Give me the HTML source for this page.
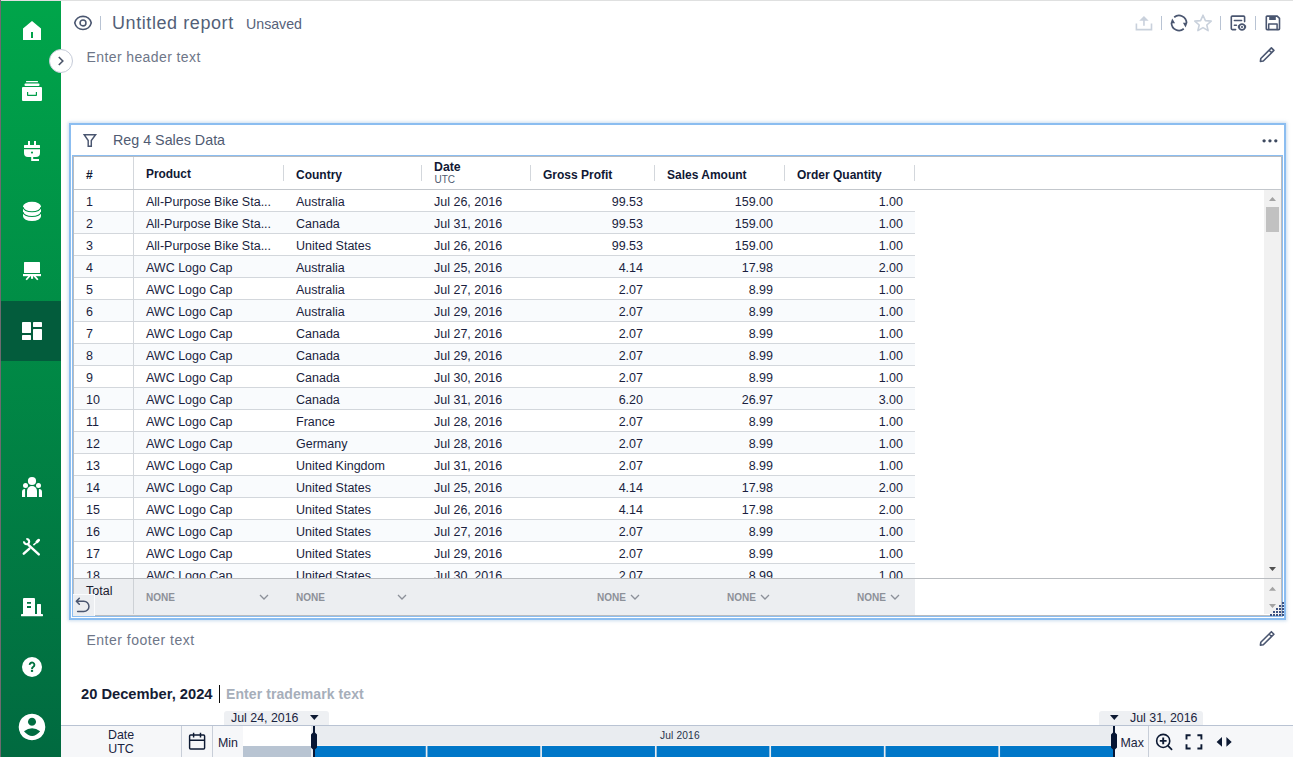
<!DOCTYPE html>
<html><head><meta charset="utf-8">
<style>
*{margin:0;padding:0;box-sizing:border-box}
html,body{width:1293px;height:757px;overflow:hidden;background:#fff;font-family:"Liberation Sans",sans-serif;position:relative}
.a{position:absolute}
.t{position:absolute;white-space:nowrap;line-height:1}
#leftline{left:0;top:0;width:1px;height:757px;background:#6e6a70}
#topline{left:1px;top:0;width:1292px;height:1px;background:#dfe0e0}
#side{left:1px;top:1px;width:60px;height:756px;background:linear-gradient(#00a54a,#016a40)}
.sico{position:absolute;left:1px;width:60px;height:60px}
.sico svg{position:absolute;left:0;top:0}
/* table */
.row{position:absolute;left:74px;width:841px;height:22px;border-bottom:1px solid #d3d7dc}
.row.alt{background:#f9fbfd}
.cell{position:absolute;top:1px;height:21px;font-size:12.5px;color:#1a1e3e;line-height:22px;white-space:nowrap}
.vd{position:absolute;top:0;width:1px;height:21px;background:#d3d7dc;left:59px}
.r{text-align:right}
.hd{position:absolute;font-size:12px;font-weight:bold;color:#101834;white-space:nowrap;line-height:1}
.hdiv{position:absolute;top:165px;width:1px;height:16px;background:#d3d7dc}
.none{position:absolute;top:593px;font-size:10px;font-weight:bold;color:#8c9199;line-height:1}
.chev{position:absolute;top:593.5px}
</style></head><body>
<div class="a" id="leftline"></div>
<div class="a" id="topline"></div>
<div class="a" id="side"></div>
<div class="a" style="left:1px;top:301px;width:60px;height:60px;background:#035c3c"></div>

<!-- sidebar icons -->
<svg class="a" style="left:0;top:0" width="62" height="757" viewBox="0 0 62 757">
 <g fill="#fff">
  <!-- home -->
  <path d="M23 28.5 L32 21 L41 28.5 V40 H23 Z M31 32 V38 H33 V32 Z" fill-rule="evenodd"/>
  <!-- archive -->
  <rect x="26" y="81" width="12" height="1.3" rx=".5"/>
  <rect x="24.5" y="83.5" width="15" height="2.4" rx="1"/>
  <path d="M22 88 a1 1 0 0 1 1 -1 H41 a1 1 0 0 1 1 1 V100 a1 1 0 0 1 -1 1 H23 a1 1 0 0 1 -1 -1 Z M27 92 V95.2 a.8 .8 0 0 0 .8 .8 H36.2 a.8 .8 0 0 0 .8 -.8 V92 H35.8 V94.8 H28.2 V92 Z" fill-rule="evenodd"/>
  <!-- plug -->
  <rect x="28" y="141" width="2" height="4.5"/>
  <rect x="34" y="141" width="2" height="4.5"/>
  <rect x="24" y="145" width="16" height="3" rx=".5"/>
  <path d="M24 149.2 H40 V153 a4 4 0 0 1 -4 4 H28 a4 4 0 0 1 -4 -4 Z M32 151.6 a1 1 0 1 0 .01 0 Z" fill-rule="evenodd"/>
  <path d="M31.2 156.5 H33.2 V159 H39 V161 H31.2 Z"/>
  <!-- database -->
  <path d="M23 206.45 A9 4.65 0 0 1 41 206.45 V216.35 A9 4.65 0 0 1 23 216.35 Z"/>
  <path d="M23 207.1 A9 4.65 0 0 0 41 207.1 M23 211.9 A9 4.65 0 0 0 41 211.9" fill="none" stroke="#009447" stroke-width="1.15"/>
  <!-- presentation -->
  <rect x="24" y="262" width="16" height="11" rx=".5"/>
  <rect x="23" y="274" width="18" height="2.2"/>
  <rect x="31" y="276" width="2.1" height="2.8"/>
  <path d="M29.9 275.6 L26.2 279.8 M34.1 275.6 L37.8 279.8" fill="none" stroke="#fff" stroke-width="1.7"/>
  <!-- dashboard -->
  <rect x="22" y="322" width="9" height="11" rx=".4"/>
  <rect x="22" y="335" width="9" height="5" rx=".4"/>
  <rect x="33" y="322" width="9" height="5" rx=".4"/>
  <rect x="33" y="329" width="9" height="11" rx=".4"/>
  <!-- people -->
  <circle cx="32" cy="481" r="4.1"/>
  <circle cx="25.5" cy="485.5" r="2.5"/>
  <circle cx="38.5" cy="485.5" r="2.5"/>
  <path d="M27 491 a5 5 0 0 1 10 0 V497 H27 Z"/>
  <path d="M22 492 a3 3 0 0 1 3.1 -3 V497 H22 Z"/>
  <path d="M42 492 a3 3 0 0 0 -3.1 -3 V497 H42 Z"/>
  <!-- tools -->
  <g stroke="#fff" fill="none">
   <path d="M28.4 544.8 L38.8 554.4" stroke-width="2.4" stroke-linecap="round"/>
   <path d="M26.37 539.0 A2.6 2.6 0 1 1 24.0 541.37" stroke-width="2.1"/>
   <path d="M23.8 553.6 L29.4 548.6" stroke-width="2.5" stroke-linecap="round"/>
   <path d="M33.4 545.2 L35.8 543" stroke-width="1.6"/>
  </g>
  <ellipse cx="37.7" cy="541.1" rx="2.9" ry="1.5" transform="rotate(-42 37.7 541.1)"/>
  <!-- building -->
  <path d="M23 599 a1 1 0 0 1 1 -1 H34 a1 1 0 0 1 1 1 V614 H23 Z M27 602 V603.8 H31 V602 Z M27 606 V608 H31 V606 Z" fill-rule="evenodd"/>
  <rect x="37" y="604" width="4" height="10.5" rx=".5"/>
  <rect x="21" y="614" width="22" height="2.2" rx=".4"/>
  <!-- help -->
  <circle cx="32" cy="667" r="10"/>
  <path d="M29.7 664.9 A2.35 2.35 0 1 1 33.3 666.8 C32.4 667.4 32 667.9 32 669" fill="none" stroke="#01713f" stroke-width="1.9"/>
  <rect x="30.9" y="669.8" width="2.2" height="2.1" fill="#01713f"/>
  <!-- user -->
  <path d="M32 713.7 a13.3 13.3 0 1 1 -.01 0 Z M32 717.8 a4 4 0 1 0 .01 0 Z M24 731.3 Q32 725.1 40.2 731.3 Q32 740.9 24 731.3 Z" fill-rule="evenodd"/>
 </g>
</svg>

<!-- expand button -->
<div class="a" style="left:49px;top:49px;width:24px;height:24px;border-radius:50%;background:#fff;border:1px solid #c5cbd8"></div>
<svg class="a" style="left:49px;top:49px" width="24" height="24"><path d="M9.8 8 L13.8 12 L9.8 16" fill="none" stroke="#4a5468" stroke-width="1.6"/></svg>

<!-- header -->
<svg class="a" style="left:72px;top:14px" width="22" height="18" viewBox="0 0 22 18">
 <path d="M2.75 8.9 C3.6 5 7 2.3 11 2.3 C15 2.3 18.4 5 19.25 8.9 C18.4 12.8 15 15.5 11 15.5 C7 15.5 3.6 12.8 2.75 8.9 Z" fill="none" stroke="#4a5670" stroke-width="1.65"/>
 <circle cx="11" cy="8.9" r="2.95" fill="none" stroke="#4a5670" stroke-width="1.55"/>
</svg>
<div class="a" style="left:100px;top:16px;width:1px;height:14px;background:#b8c3d3"></div>
<div class="t" style="left:112px;top:14px;font-size:18px;letter-spacing:.58px;color:#535f78">Untitled report</div>
<div class="t" style="left:246px;top:17px;font-size:14.2px;color:#56617a">Unsaved</div>
<div class="t" style="left:86.5px;top:50px;font-size:14px;letter-spacing:.4px;color:#6e7688">Enter header text</div>

<!-- top right icons -->
<svg class="a" style="left:1130px;top:10px" width="160" height="60" viewBox="1130 10 160 60">
 <g fill="none" stroke-linecap="round" stroke-linejoin="round">
  <!-- upload -->
  <g stroke="#c9d1dc" stroke-width="1.7">
   <path d="M1136.4 23.4 V29.6 H1151.5 V23.4" stroke-linecap="butt" stroke-linejoin="miter" stroke-width="1.6"/>
   <path d="M1143.95 20 V25.7" stroke-linecap="butt" stroke-width="1.6"/>
  </g>
  <path d="M1139.2 20.7 L1143.95 15.9 L1148.7 20.7 Z" fill="#c9d1dc"/>
  <!-- refresh -->
  <g stroke="#4a5670" stroke-width="1.7" stroke-linecap="butt">
   <path d="M1174.2 17.25 A7.5 7.5 0 0 1 1186.5 23"/>
   <path d="M1183.8 28.75 A7.5 7.5 0 0 1 1171.5 23"/>
  </g>
  <path d="M1182.9 22.7 L1187.4 22.7 L1185.6 27.6 Z" fill="#4a5670"/>
  <path d="M1170.6 23.3 L1175.1 23.3 L1172.2 18.4 Z" fill="#4a5670"/>
  <!-- star -->
  <path d="M1203 15.2 L1205.4 20.6 L1211.2 21.1 L1206.8 25 L1208.1 30.6 L1203 27.6 L1197.9 30.6 L1199.2 25 L1194.8 21.1 L1200.6 20.6 Z" stroke="#c9d1dc" stroke-width="1.6"/>
  <!-- report view -->
  <g stroke="#4a5670" stroke-width="1.6" stroke-linecap="round">
   <path d="M1235.6 29.6 H1232.3 a1 1 0 0 1 -1 -1 V17.1 a1 1 0 0 1 1 -1 H1243.6 a1 1 0 0 1 1 1 V21.6"/>
   <path d="M1234.4 20.5 H1241.6 M1234.4 25.3 H1236.4"/>
  </g>
  <path d="M1237.7 27 C1238.4 24.6 1240 23.3 1242 23.3 C1244 23.3 1245.6 24.6 1246.3 27 C1245.6 29.4 1244 30.7 1242 30.7 C1240 30.7 1238.4 29.4 1237.7 27 Z" fill="#4a5670"/>
  <circle cx="1242" cy="27" r="2.1" fill="#fff"/>
  <circle cx="1242" cy="27" r="1.05" fill="#4a5670"/>
  <!-- save -->
  <path d="M1266.3 16.9 a.8 .8 0 0 1 .8 -.8 H1277.2 L1279.5 18.4 V28.8 a.8 .8 0 0 1 -.8 .8 H1267.1 a.8 .8 0 0 1 -.8 -.8 Z" stroke="#4a5670" stroke-width="1.6"/>
  <rect x="1269.2" y="16" width="6.6" height="4" fill="#4a5670"/>
  <path d="M1268.7 29.6 V24 H1277.1 V29.6" stroke="#4a5670" stroke-width="1.5"/>
  <!-- pencil header -->
  <path d="M1260.4 61.4 L1260.8 58.5 L1271.4 47.9 L1273.9 50.4 L1263.3 61.0 Z M1269.1 50.2 L1271.6 52.7" stroke="#4a5670" stroke-width="1.6" stroke-linejoin="round"/>
 </g>
 <g fill="#b8c3d3">
  <rect x="1161" y="16" width="1" height="14"/>
  <rect x="1220" y="16" width="1" height="14"/>
  <rect x="1255" y="16" width="1" height="14"/>
 </g>
</svg>

<!-- panel -->
<div class="a" style="left:69px;top:123px;width:1217px;height:497px;border:2px solid #8bbdf0;box-shadow:0 0 3px 1px rgba(120,165,210,.38)"></div>
<svg class="a" style="left:82px;top:132px" width="16" height="17" viewBox="0 0 16 17">
 <path d="M2.2 2.7 H13.6 L9.3 8.5 V14.25 H6.2 V8.5 Z" fill="none" stroke="#4a5670" stroke-width="1.45" stroke-linejoin="miter"/>
</svg>
<div class="t" style="left:113px;top:133px;font-size:14.3px;color:#505b72">Reg 4 Sales Data</div>
<svg class="a" style="left:1260px;top:137px" width="20" height="8"><g fill="#3e4a60"><circle cx="4.1" cy="3.8" r="1.65"/><circle cx="9.95" cy="3.8" r="1.65"/><circle cx="15.8" cy="3.8" r="1.65"/></g></svg>

<!-- table frame -->
<div class="a" style="left:72px;top:155px;width:1211px;height:462px;border:1px solid #8bbdf0"></div>
<div class="a" style="left:73px;top:156px;width:1209px;height:460px;border:1px solid #b9bcc0"></div>
<div class="a" style="left:74px;top:189px;width:1207px;height:1px;background:#c3c7cc"></div>
<div class="a" style="left:133px;top:157px;width:1px;height:32px;background:#d3d7dc"></div>

<!-- header labels -->
<div class="hd" style="left:86px;top:169px">#</div>
<div class="hd" style="left:146px;top:169px;font-size:11.9px">Product</div>
<div class="hdiv" style="left:283px"></div>
<div class="hd" style="left:296px;top:169px">Country</div>
<div class="hdiv" style="left:421px"></div>
<div class="hd" style="left:434px;top:161px;font-size:12.3px">Date</div>
<div class="t" style="left:434.5px;top:175px;font-size:10px;color:#4f5a70">UTC</div>
<div class="hdiv" style="left:530px"></div>
<div class="hd" style="left:543px;top:169px">Gross Profit</div>
<div class="hdiv" style="left:654px"></div>
<div class="hd" style="left:667px;top:169px">Sales Amount</div>
<div class="hdiv" style="left:784px"></div>
<div class="hd" style="left:797px;top:169px">Order Quantity</div>
<div class="hdiv" style="left:914px"></div>

<!--ROWS-->
<div class="row" style="top:190px"><div class="cell" style="left:12px">1</div><div class="vd"></div><div class="cell" style="left:72px">All-Purpose Bike Sta...</div><div class="cell" style="left:222px">Australia</div><div class="cell" style="left:360px">Jul 26, 2016</div><div class="cell r" style="left:457px;width:112px">99.53</div><div class="cell r" style="left:581px;width:118px">159.00</div><div class="cell r" style="left:711px;width:118px">1.00</div></div>
<div class="row alt" style="top:212px"><div class="cell" style="left:12px">2</div><div class="vd"></div><div class="cell" style="left:72px">All-Purpose Bike Sta...</div><div class="cell" style="left:222px">Canada</div><div class="cell" style="left:360px">Jul 31, 2016</div><div class="cell r" style="left:457px;width:112px">99.53</div><div class="cell r" style="left:581px;width:118px">159.00</div><div class="cell r" style="left:711px;width:118px">1.00</div></div>
<div class="row" style="top:234px"><div class="cell" style="left:12px">3</div><div class="vd"></div><div class="cell" style="left:72px">All-Purpose Bike Sta...</div><div class="cell" style="left:222px">United States</div><div class="cell" style="left:360px">Jul 26, 2016</div><div class="cell r" style="left:457px;width:112px">99.53</div><div class="cell r" style="left:581px;width:118px">159.00</div><div class="cell r" style="left:711px;width:118px">1.00</div></div>
<div class="row alt" style="top:256px"><div class="cell" style="left:12px">4</div><div class="vd"></div><div class="cell" style="left:72px">AWC Logo Cap</div><div class="cell" style="left:222px">Australia</div><div class="cell" style="left:360px">Jul 25, 2016</div><div class="cell r" style="left:457px;width:112px">4.14</div><div class="cell r" style="left:581px;width:118px">17.98</div><div class="cell r" style="left:711px;width:118px">2.00</div></div>
<div class="row" style="top:278px"><div class="cell" style="left:12px">5</div><div class="vd"></div><div class="cell" style="left:72px">AWC Logo Cap</div><div class="cell" style="left:222px">Australia</div><div class="cell" style="left:360px">Jul 27, 2016</div><div class="cell r" style="left:457px;width:112px">2.07</div><div class="cell r" style="left:581px;width:118px">8.99</div><div class="cell r" style="left:711px;width:118px">1.00</div></div>
<div class="row alt" style="top:300px"><div class="cell" style="left:12px">6</div><div class="vd"></div><div class="cell" style="left:72px">AWC Logo Cap</div><div class="cell" style="left:222px">Australia</div><div class="cell" style="left:360px">Jul 29, 2016</div><div class="cell r" style="left:457px;width:112px">2.07</div><div class="cell r" style="left:581px;width:118px">8.99</div><div class="cell r" style="left:711px;width:118px">1.00</div></div>
<div class="row" style="top:322px"><div class="cell" style="left:12px">7</div><div class="vd"></div><div class="cell" style="left:72px">AWC Logo Cap</div><div class="cell" style="left:222px">Canada</div><div class="cell" style="left:360px">Jul 27, 2016</div><div class="cell r" style="left:457px;width:112px">2.07</div><div class="cell r" style="left:581px;width:118px">8.99</div><div class="cell r" style="left:711px;width:118px">1.00</div></div>
<div class="row alt" style="top:344px"><div class="cell" style="left:12px">8</div><div class="vd"></div><div class="cell" style="left:72px">AWC Logo Cap</div><div class="cell" style="left:222px">Canada</div><div class="cell" style="left:360px">Jul 29, 2016</div><div class="cell r" style="left:457px;width:112px">2.07</div><div class="cell r" style="left:581px;width:118px">8.99</div><div class="cell r" style="left:711px;width:118px">1.00</div></div>
<div class="row" style="top:366px"><div class="cell" style="left:12px">9</div><div class="vd"></div><div class="cell" style="left:72px">AWC Logo Cap</div><div class="cell" style="left:222px">Canada</div><div class="cell" style="left:360px">Jul 30, 2016</div><div class="cell r" style="left:457px;width:112px">2.07</div><div class="cell r" style="left:581px;width:118px">8.99</div><div class="cell r" style="left:711px;width:118px">1.00</div></div>
<div class="row alt" style="top:388px"><div class="cell" style="left:12px">10</div><div class="vd"></div><div class="cell" style="left:72px">AWC Logo Cap</div><div class="cell" style="left:222px">Canada</div><div class="cell" style="left:360px">Jul 31, 2016</div><div class="cell r" style="left:457px;width:112px">6.20</div><div class="cell r" style="left:581px;width:118px">26.97</div><div class="cell r" style="left:711px;width:118px">3.00</div></div>
<div class="row" style="top:410px"><div class="cell" style="left:12px">11</div><div class="vd"></div><div class="cell" style="left:72px">AWC Logo Cap</div><div class="cell" style="left:222px">France</div><div class="cell" style="left:360px">Jul 28, 2016</div><div class="cell r" style="left:457px;width:112px">2.07</div><div class="cell r" style="left:581px;width:118px">8.99</div><div class="cell r" style="left:711px;width:118px">1.00</div></div>
<div class="row alt" style="top:432px"><div class="cell" style="left:12px">12</div><div class="vd"></div><div class="cell" style="left:72px">AWC Logo Cap</div><div class="cell" style="left:222px">Germany</div><div class="cell" style="left:360px">Jul 28, 2016</div><div class="cell r" style="left:457px;width:112px">2.07</div><div class="cell r" style="left:581px;width:118px">8.99</div><div class="cell r" style="left:711px;width:118px">1.00</div></div>
<div class="row" style="top:454px"><div class="cell" style="left:12px">13</div><div class="vd"></div><div class="cell" style="left:72px">AWC Logo Cap</div><div class="cell" style="left:222px">United Kingdom</div><div class="cell" style="left:360px">Jul 31, 2016</div><div class="cell r" style="left:457px;width:112px">2.07</div><div class="cell r" style="left:581px;width:118px">8.99</div><div class="cell r" style="left:711px;width:118px">1.00</div></div>
<div class="row alt" style="top:476px"><div class="cell" style="left:12px">14</div><div class="vd"></div><div class="cell" style="left:72px">AWC Logo Cap</div><div class="cell" style="left:222px">United States</div><div class="cell" style="left:360px">Jul 25, 2016</div><div class="cell r" style="left:457px;width:112px">4.14</div><div class="cell r" style="left:581px;width:118px">17.98</div><div class="cell r" style="left:711px;width:118px">2.00</div></div>
<div class="row" style="top:498px"><div class="cell" style="left:12px">15</div><div class="vd"></div><div class="cell" style="left:72px">AWC Logo Cap</div><div class="cell" style="left:222px">United States</div><div class="cell" style="left:360px">Jul 26, 2016</div><div class="cell r" style="left:457px;width:112px">4.14</div><div class="cell r" style="left:581px;width:118px">17.98</div><div class="cell r" style="left:711px;width:118px">2.00</div></div>
<div class="row alt" style="top:520px"><div class="cell" style="left:12px">16</div><div class="vd"></div><div class="cell" style="left:72px">AWC Logo Cap</div><div class="cell" style="left:222px">United States</div><div class="cell" style="left:360px">Jul 27, 2016</div><div class="cell r" style="left:457px;width:112px">2.07</div><div class="cell r" style="left:581px;width:118px">8.99</div><div class="cell r" style="left:711px;width:118px">1.00</div></div>
<div class="row" style="top:542px"><div class="cell" style="left:12px">17</div><div class="vd"></div><div class="cell" style="left:72px">AWC Logo Cap</div><div class="cell" style="left:222px">United States</div><div class="cell" style="left:360px">Jul 29, 2016</div><div class="cell r" style="left:457px;width:112px">2.07</div><div class="cell r" style="left:581px;width:118px">8.99</div><div class="cell r" style="left:711px;width:118px">1.00</div></div>
<div class="row alt" style="top:564px;height:18px;overflow:hidden;border-bottom:none"><div class="cell" style="left:12px">18</div><div class="vd"></div><div class="cell" style="left:72px">AWC Logo Cap</div><div class="cell" style="left:222px">United States</div><div class="cell" style="left:360px">Jul 30, 2016</div><div class="cell r" style="left:457px;width:112px">2.07</div><div class="cell r" style="left:581px;width:118px">8.99</div><div class="cell r" style="left:711px;width:118px">1.00</div></div>
<!--/ROWS-->

<!-- scrollbar -->
<div class="a" style="left:1264px;top:190px;width:17px;height:388px;background:#f1f1f1"></div>
<svg class="a" style="left:1264px;top:190px" width="17" height="388">
 <path d="M5 11 L8.5 7 L12 11 Z" fill="#a3a3a3"/>
 <rect x="2" y="17" width="13" height="25" fill="#c1c1c1"/>
 <path d="M5 377 L8.5 381 L12 377 Z" fill="#505050"/>
</svg>

<!-- footer -->
<div class="a" style="left:74px;top:578px;width:1207px;height:1px;background:#b9bcc0"></div>
<div class="a" style="left:74px;top:579px;width:841px;height:36px;background:#eceef1"></div>
<div class="a" style="left:133px;top:579px;width:1px;height:35px;background:#cdd1d6"></div>
<div class="t" style="left:86px;top:585px;font-size:12.5px;color:#1b2030">Total</div>
<div class="a" style="left:73px;top:594px;width:22px;height:22px;border-top:1px solid #fbfcfd;border-right:1px solid #fbfcfd;background:#eceef1"></div>
<svg class="a" style="left:73px;top:594px" width="22" height="22"><path d="M6.3 4.3 L3.3 7.3 L6.3 10.3 M3.5 7.3 H10.8 A5.15 5.15 0 0 1 10.8 17.6 H4.6" fill="none" stroke="#4a5670" stroke-width="1.5" stroke-linecap="round" stroke-linejoin="round"/></svg>

<div class="none" style="left:146px">NONE</div>
<svg class="chev" style="left:259px" width="10" height="7"><path d="M1 1 L5 5 L9 1" fill="none" stroke="#8c9099" stroke-width="1.3"/></svg>
<div class="none" style="left:296px">NONE</div>
<svg class="chev" style="left:397px" width="10" height="7"><path d="M1 1 L5 5 L9 1" fill="none" stroke="#8c9099" stroke-width="1.3"/></svg>
<div class="none" style="left:597px">NONE</div>
<svg class="chev" style="left:630px" width="10" height="7"><path d="M1 1 L5 5 L9 1" fill="none" stroke="#8c9099" stroke-width="1.3"/></svg>
<div class="none" style="left:727px">NONE</div>
<svg class="chev" style="left:760px" width="10" height="7"><path d="M1 1 L5 5 L9 1" fill="none" stroke="#8c9099" stroke-width="1.3"/></svg>
<div class="none" style="left:857px">NONE</div>
<svg class="chev" style="left:890px" width="10" height="7"><path d="M1 1 L5 5 L9 1" fill="none" stroke="#8c9099" stroke-width="1.3"/></svg>

<div class="a" style="left:1264px;top:579px;width:17px;height:35px;background:#f1f1f1"></div>
<svg class="a" style="left:1264px;top:579px" width="22" height="40">
 <path d="M5 11.8 L8.5 7.8 L12 11.8 Z" fill="#a3a3a3"/>
 <path d="M5 25 L8.5 29 L12 25 Z" fill="#a3a3a3"/>
</svg>
<svg class="a" style="left:0;top:0" width="1293" height="757"><g fill="#3d5282"><rect x="1282" y="602" width="2" height="2"/><rect x="1279" y="605" width="2" height="2"/><rect x="1282" y="605" width="2" height="2"/><rect x="1276" y="608" width="2" height="2"/><rect x="1279" y="608" width="2" height="2"/><rect x="1282" y="608" width="2" height="2"/><rect x="1273" y="611" width="2" height="2"/><rect x="1276" y="611" width="2" height="2"/><rect x="1279" y="611" width="2" height="2"/><rect x="1282" y="611" width="2" height="2"/><rect x="1270" y="614" width="2" height="2"/><rect x="1273" y="614" width="2" height="2"/><rect x="1276" y="614" width="2" height="2"/><rect x="1279" y="614" width="2" height="2"/><rect x="1282" y="614" width="2" height="2"/></g></svg>

<!-- footer text -->
<div class="t" style="left:86.5px;top:633px;font-size:14px;letter-spacing:.5px;color:#6e7688">Enter footer text</div>
<svg class="a" style="left:1255px;top:626px" width="24" height="24" viewBox="1255 625.2 24 24">
 <path d="M1260.4 644.4 L1260.8 641.5 L1271.4 630.9 L1273.9 633.4 L1263.3 644.0 Z M1269.1 633.2 L1271.6 635.7" fill="none" stroke="#4a5670" stroke-width="1.6" stroke-linejoin="round"/>
</svg>

<div class="t" style="left:81px;top:687px;font-size:14.7px;font-weight:bold;color:#151c34">20 December, 2024</div>
<div class="a" style="left:219px;top:685px;width:1px;height:18px;background:#0a0a0a"></div>
<div class="t" style="left:226px;top:687px;font-size:14px;letter-spacing:.08px;font-weight:bold;color:#a6aeba">Enter trademark text</div>

<!-- timeline -->
<div class="a" style="left:224px;top:711px;width:105px;height:14px;background:#eef0f3;border-radius:3px 3px 0 0"></div>
<div class="t" style="left:231px;top:712px;font-size:12.4px;color:#1a2440">Jul 24, 2016</div>
<svg class="a" style="left:309px;top:714px" width="11" height="7"><path d="M1 1 H9.6 L5.3 6 Z" fill="#0d1a33"/></svg>
<div class="a" style="left:1099px;top:711px;width:104px;height:14px;background:#eef0f3;border-radius:3px 3px 0 0"></div>
<svg class="a" style="left:1109px;top:714px" width="11" height="7"><path d="M1 1 H9.6 L5.3 6 Z" fill="#0d1a33"/></svg>
<div class="t" style="left:1130px;top:712px;font-size:12.4px;color:#1a2440">Jul 31, 2016</div>

<div class="a" style="left:61px;top:725px;width:1232px;height:32px;background:#f6f7f9;border-top:1px solid #b9c3d3"></div>
<div class="t" style="left:108px;top:729px;font-size:12.4px;color:#1a2440;text-align:center;width:26px">Date</div>
<div class="t" style="left:108px;top:743px;font-size:12.4px;color:#1a2440;text-align:center;width:26px">UTC</div>
<div class="a" style="left:181px;top:726px;width:1px;height:31px;background:#c8ced8"></div>
<svg class="a" style="left:183px;top:726px" width="28" height="28" viewBox="183 726 28 28"><g fill="none" stroke="#0d1a33" stroke-width="1.45"><rect x="189.6" y="735" width="15" height="13.9" rx="1"/><path d="M189.6 740.2 H204.6 M193.6 732.8 V737.6 M200.5 732.8 V737.6"/></g></svg>
<div class="a" style="left:212px;top:726px;width:1px;height:31px;background:#c8ced8"></div>
<div class="t" style="left:218px;top:737px;font-size:12.4px;color:#1a2440">Min</div>
<div class="a" style="left:243px;top:726px;width:871px;height:31px;background:#e9ecf0"></div>
<div class="a" style="left:243px;top:726px;width:68px;height:20px;background:#fff"></div>
<div class="a" style="left:243px;top:746px;width:68px;height:11px;background:#b8c4d2"></div>
<div class="a" style="left:311px;top:745px;width:802px;height:1px;background:#f3f1f2"></div>
<div class="a" style="left:314px;top:746px;width:799px;height:11px;background:#0077c8"></div>
<div class="t" style="left:660px;top:731px;font-size:10.2px;letter-spacing:.15px;color:#28324a">Jul 2016</div>
<svg class="a" style="left:0;top:0" width="1293" height="757"><g fill="#e9ecf0"><rect x="425.75" y="746" width="1.7" height="11"/><rect x="540.25" y="746" width="1.7" height="11"/><rect x="654.95" y="746" width="1.7" height="11"/><rect x="769.35" y="746" width="1.7" height="11"/><rect x="883.85" y="746" width="1.7" height="11"/><rect x="998.35" y="746" width="1.7" height="11"/></g></svg>
<svg class="a" style="left:300px;top:725px" width="30" height="32" viewBox="300 725 30 32"><path d="M313 726 H315 V732.4 L317 734.4 V747.4 L315 749.4 V757 H313 V749.4 L311 747.4 V734.4 L313 732.4 Z" fill="#061533"/></svg>
<svg class="a" style="left:1100px;top:725px" width="30" height="32" viewBox="1100 725 30 32"><path d="M1113 726 H1115 V732.4 L1117 734.4 V747.4 L1115 749.4 V757 H1113 V749.4 L1111 747.4 V734.4 L1113 732.4 Z" fill="#061533"/></svg>
<div class="t" style="left:1120.5px;top:737px;font-size:12.4px;color:#1a2440">Max</div>
<div class="a" style="left:1148px;top:726px;width:1px;height:31px;background:#c8ced8"></div>
<svg class="a" style="left:1150px;top:726px" width="143" height="31" viewBox="1150 726 143 31">
 <g fill="none" stroke="#0d1a33" stroke-linecap="butt">
  <circle cx="1163.2" cy="740.9" r="6.55" stroke-width="1.6"/>
  <path d="M1168.1 745.9 L1171.6 749.4" stroke-width="1.7" stroke-linecap="round"/>
  <path d="M1163.2 737.6 V744.3 M1159.8 740.9 H1166.6" stroke-width="1.9"/>
  <path d="M1186.5 739.6 V735.2 H1190.6 M1197.4 735.2 H1201.4 V739.6 M1201.4 744.2 V748.5 H1197.4 M1190.6 748.5 H1186.5 V744.2" stroke-width="1.9"/>
 </g>
 <path d="M1216.6 741.9 L1222 737 V746.8 Z M1231.7 741.9 L1226.4 737 V746.8 Z" fill="#0d1a33"/>
</svg>

</body></html>
